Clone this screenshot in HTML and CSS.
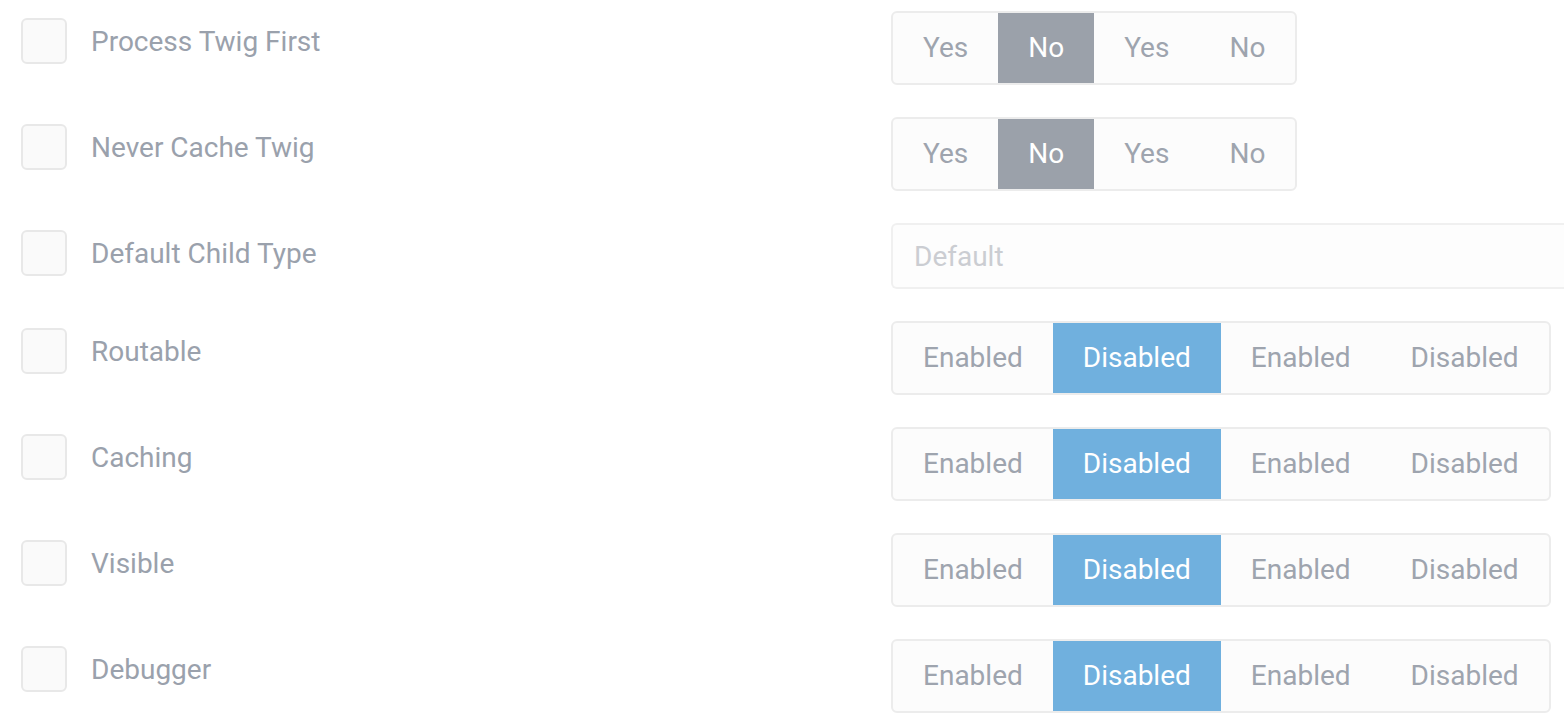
FILE: index.html
```html
<!DOCTYPE html>
<html>
<head>
<meta charset="utf-8">
<link rel="stylesheet" href="styles.css">
</head>
<body>
<div class="form">
  <div class="row">
    <div class="left"><span class="check"></span><span class="label">Process Twig First</span></div>
    <div class="toggle"><span class="seg">Yes</span><span class="seg on-grey">No</span><span class="seg">Yes</span><span class="seg">No</span></div>
  </div>
  <div class="row">
    <div class="left"><span class="check"></span><span class="label">Never Cache Twig</span></div>
    <div class="toggle"><span class="seg">Yes</span><span class="seg on-grey">No</span><span class="seg">Yes</span><span class="seg">No</span></div>
  </div>
  <div class="row">
    <div class="left"><span class="check"></span><span class="label">Default Child Type</span></div>
    <div class="input"><span class="placeholder">Default</span></div>
  </div>
  <div class="row">
    <div class="left"><span class="check"></span><span class="label">Routable</span></div>
    <div class="toggle"><span class="seg">Enabled</span><span class="seg on-blue">Disabled</span><span class="seg">Enabled</span><span class="seg">Disabled</span></div>
  </div>
  <div class="row">
    <div class="left"><span class="check"></span><span class="label">Caching</span></div>
    <div class="toggle"><span class="seg">Enabled</span><span class="seg on-blue">Disabled</span><span class="seg">Enabled</span><span class="seg">Disabled</span></div>
  </div>
  <div class="row">
    <div class="left"><span class="check"></span><span class="label">Visible</span></div>
    <div class="toggle"><span class="seg">Enabled</span><span class="seg on-blue">Disabled</span><span class="seg">Enabled</span><span class="seg">Disabled</span></div>
  </div>
  <div class="row">
    <div class="left"><span class="check"></span><span class="label">Debugger</span></div>
    <div class="toggle"><span class="seg">Enabled</span><span class="seg on-blue">Disabled</span><span class="seg">Enabled</span><span class="seg">Disabled</span></div>
  </div>
</div>
</body>
</html>
```

FILE: styles.css
```css
html, body {
  margin: 0;
  padding: 0;
  background: #ffffff;
  overflow: hidden;
}
body {
  font-family: Roboto, "Liberation Sans", sans-serif;
  font-size: 28px;
  color: #9aa1ac;
}
.form {
  display: flex;
  flex-direction: column;
  gap: 32px;
  padding-top: 11px;
}
.row {
  display: flex;
  align-items: flex-start;
}
.left {
  width: 891px;
  flex: none;
  display: flex;
  align-items: flex-start;
  padding-top: 7px;
  padding-left: 21px;
  box-sizing: border-box;
}
.check {
  width: 46px;
  height: 46px;
  box-sizing: border-box;
  border: 2px solid #e8e8e8;
  border-radius: 6px;
  background: #fafafa;
  flex: none;
}
.label {
  margin-left: 24px;
  line-height: 46px;
  padding-top: 1px;
  color: #9aa1ac;
}
.toggle {
  display: flex;
  border: 2px solid #ececec;
  border-radius: 6px;
  background: #fcfcfc;
  height: 74px;
  box-sizing: border-box;
  overflow: hidden;
}
.seg {
  padding: 0 30px;
  line-height: 70px;
  color: #9ea4ae;
}
.on-grey {
  background: #9ba1aa;
  color: #ffffff;
}
.on-blue {
  background: #70b0de;
  color: #ffffff;
}
.input {
  flex: 1;
  height: 66px;
  box-sizing: border-box;
  border: 2px solid #f0f0f0;
  border-right: none;
  border-radius: 6px 0 0 6px;
  background: #fdfdfd;
  padding-left: 21px;
  display: flex;
  align-items: center;
}
.placeholder {
  color: #cbcdd2;
}
```
